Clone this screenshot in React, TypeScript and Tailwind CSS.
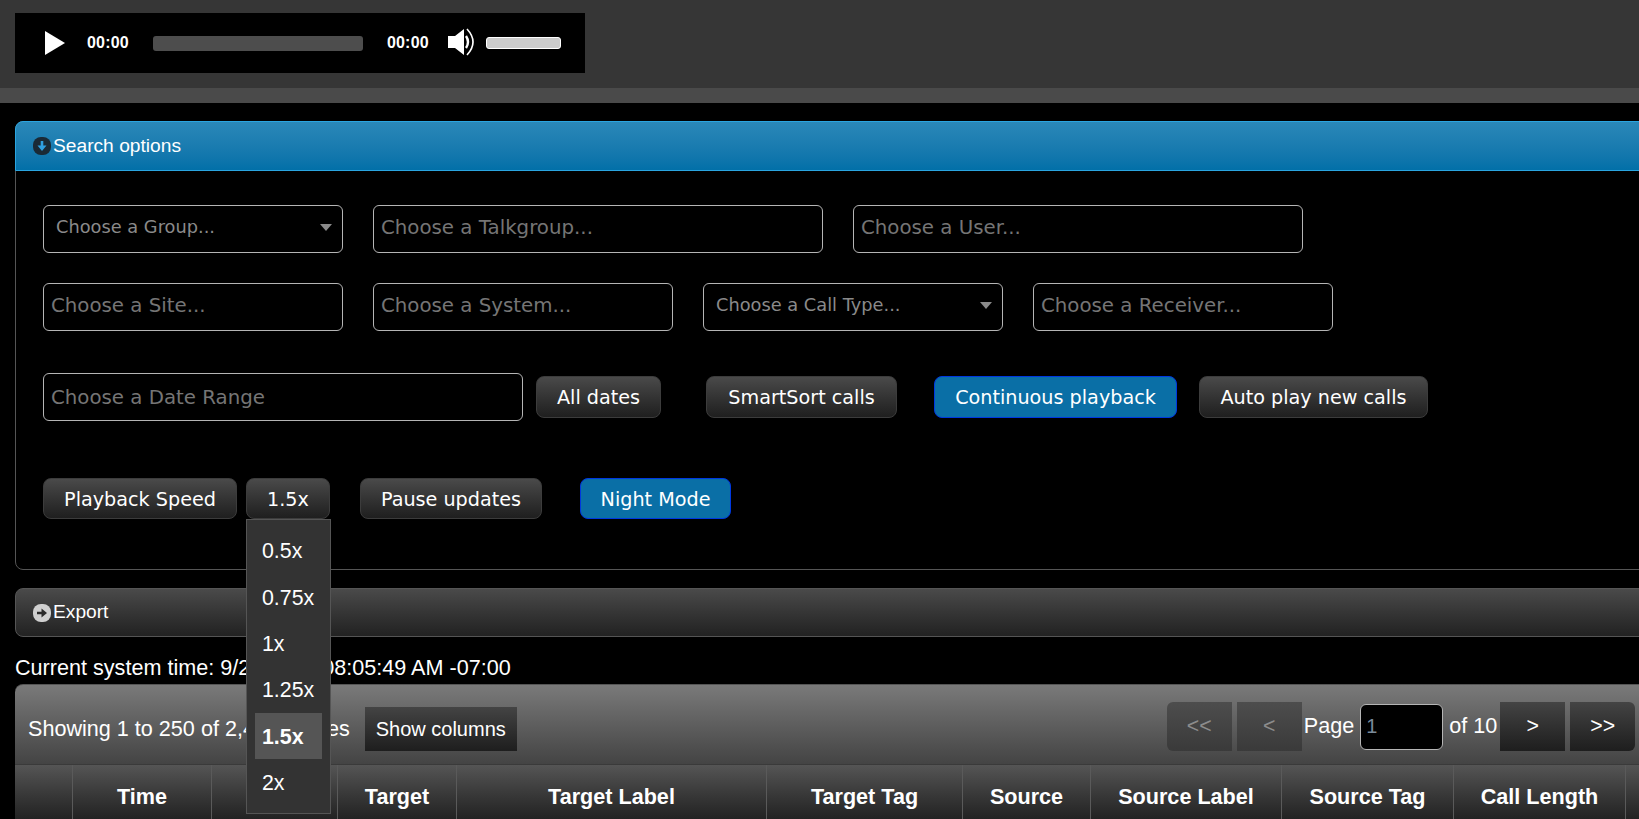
import React from 'react';

const inputClass =
  'h-12 rounded-md border border-[#b5b5b5] bg-black pl-[7px] pr-2 text-[19.8px] text-[#e6e6e6] placeholder:text-[#757575] outline-none [font-family:"DejaVu_Sans",sans-serif]';

const buttonBase =
  'rounded-lg border pt-[3px] text-[19.2px] text-white [font-family:"DejaVu_Sans",sans-serif] flex items-center justify-center';
const grayButton = `${buttonBase} border-[#3c3c3c] bg-linear-to-b from-[#4a4a4a] to-[#1f1f1f]`;
const blueButton = `${buttonBase} border-[#0038e0] bg-[#0a6fa6]`;

const speeds = ['0.5x', '0.75x', '1x', '1.25x', '1.5x', '2x'];

const columns = [
  { label: '', width: 'w-[58px]' },
  { label: 'Time', width: 'w-[139px]' },
  { label: '', width: 'w-[126px]' },
  { label: 'Target', width: 'w-[119px]' },
  { label: 'Target Label', width: 'w-[310px]' },
  { label: 'Target Tag', width: 'w-[196px]' },
  { label: 'Source', width: 'w-[128px]' },
  { label: 'Source Label', width: 'w-[191px]' },
  { label: 'Source Tag', width: 'w-[172px]' },
  { label: 'Call Length', width: 'w-[172px]' },
  { label: '', width: 'w-[100px]' },
];

const SelectBox: React.FC<{ label: string; className: string }> = ({ label, className }) => (
  <div className={`flex h-12 items-center justify-between rounded-md border border-[#b5b5b5] bg-black pl-3 pr-[10px] text-[17.8px] text-[#8a8a8a] [font-family:"DejaVu_Sans",sans-serif] ${className}`}>
    <span className="mb-1">{label}</span>
    <span className="mb-1 h-0 w-0 border-x-[6px] border-t-[7px] border-x-transparent border-t-[#8a8a8a]" />
  </div>
);

const CircleIcon: React.FC<{ bg: string; fg: string; dir: 'down' | 'right' }> = ({ bg, fg, dir }) => (
  <svg width="18" height="18" viewBox="0 0 18 18" className="shrink-0">
    <rect width="18" height="18" rx="8" fill={bg} />
    {dir === 'down' ? (
      <path d="M7.7 4h2.6v4.5h3.2L9 14 4.5 8.5h3.2Z" fill={fg} />
    ) : (
      <path d="M4 7.7h4.5V4.5L14 9l-5.5 4.5v-3.2H4Z" fill={fg} />
    )}
  </svg>
);

const PagerButton: React.FC<{ label: string; disabled?: boolean; className?: string }> = ({ label, disabled, className = '' }) => (
  <div
    className={`flex h-[49px] w-[65px] items-center justify-center text-[21.33px] ${
      disabled
        ? 'bg-linear-to-b from-[#4d4d4d] to-[#3a3a3a] text-[#8c8c8c]'
        : 'bg-linear-to-b from-[#444444] to-[#1e1e1e] text-white'
    } ${className}`}
  >
    {label}
  </div>
);

export default function App() {
  return (
    <div className='relative h-[819px] w-[1639px] overflow-hidden bg-black text-white [font-family:"Liberation_Sans",Arial,sans-serif]'>
      {/* audio player */}
      <div className="h-[88px] bg-[#363636] pl-[15px] pt-[13px]">
        <div className="flex h-[60px] w-[570px] items-center bg-black">
          <svg width="20" height="24" viewBox="0 0 20 24" className="ml-[30px] -mt-[1px]">
            <path d="M0 0 20 12 0 24Z" fill="#fff" />
          </svg>
          <span className="ml-[22px] text-[16px] font-bold tracking-[0.2px]">00:00</span>
          <div className="ml-[24px] h-[15px] w-[210px] rounded-[3px] bg-[#4d4d4d]" />
          <span className="ml-6 text-[16px] font-bold tracking-[0.2px]">00:00</span>
          <svg width="28" height="28" viewBox="0 0 28 28" className="ml-[18px] -mt-[3px]">
            <path d="M1 8h7l9-7v26l-9-7H1Z" fill="#fff" />
            <path d="M19 8q4 6 0 12" fill="none" stroke="#fff" strokeWidth="2.4" />
            <path d="M20 1q12 13 0 26" fill="none" stroke="#fff" strokeWidth="1.6" />
          </svg>
          <div className="ml-[11px] -mt-[1px] h-3 w-[75px] rounded-[3px] border border-white bg-[#cccccc]" />
        </div>
      </div>
      <div className="h-[15px] bg-[#4a4a4a]" />

      <div className="w-[1760px] pl-[15px] pt-[18px]">
        {/* search options */}
        <div className="h-[449px] rounded-lg border border-[#555555]">
          <div className="-m-px flex h-[50px] items-center rounded-t-lg border border-[#2aa5e0] bg-linear-to-b from-[#2a88b8] to-[#0270a8] pl-[17px] text-[19.2px]">
            <CircleIcon bg="#1a2a36" fg="#2f9fe0" dir="down" />
            <span className="ml-[2px] pt-px">Search options</span>
          </div>
          <div className="px-[27px] pt-[35px]">
            <div className="flex gap-[30px]">
              <SelectBox label="Choose a Group..." className="w-[300px]" />
              <input placeholder="Choose a Talkgroup..." className={`${inputClass} w-[450px] pb-1`} />
              <input placeholder="Choose a User..." className={`${inputClass} w-[450px] pb-1`} />
            </div>
            <div className="mt-[30px] flex gap-[30px]">
              <input placeholder="Choose a Site..." className={`${inputClass} w-[300px] pb-1`} />
              <input placeholder="Choose a System..." className={`${inputClass} w-[300px] pb-1`} />
              <SelectBox label="Choose a Call Type..." className="w-[300px]" />
              <input placeholder="Choose a Receiver..." className={`${inputClass} w-[300px] pb-1`} />
            </div>
            <div className="mt-[42px] flex items-center">
              <input placeholder="Choose a Date Range" className={`${inputClass} w-[480px]`} />
              <div className={`${grayButton} ml-[13px] h-[42px] w-[125px]`}>All dates</div>
              <div className={`${grayButton} ml-[45px] h-[42px] w-[191px]`}>SmartSort calls</div>
              <div className={`${blueButton} ml-[37px] h-[42px] w-[243px]`}>Continuous playback</div>
              <div className={`${grayButton} ml-[22px] h-[42px] w-[229px]`}>Auto play new calls</div>
            </div>
            <div className="mt-[57px] flex">
              <div className={`${grayButton} h-[41px] w-[194px]`}>Playback Speed</div>
              <div className={`${grayButton} ml-[9px] h-[41px] w-[84px]`}>1.5x</div>
              <div className={`${grayButton} ml-[30px] h-[41px] w-[182px]`}>Pause updates</div>
              <div className={`${blueButton} ml-[38px] h-[41px] w-[151px]`}>Night Mode</div>
            </div>
          </div>
        </div>

        {/* export */}
        <div className="mt-[18px] flex h-[49px] items-center rounded-lg border border-[#555555] bg-linear-to-b from-[#4a4a4a] to-[#222222] pl-[17px] text-[19.2px]">
          <CircleIcon bg="#d0d0d0" fg="#2a2a2a" dir="right" />
          <span className="ml-[2px]">Export</span>
        </div>

        <div className="mt-[16px] h-[30px] text-[21.6px] leading-[30px]">Current system time: 9/21/2023 08:05:49 AM -07:00</div>

        {/* call table */}
        <div className="mt-[1px] flex h-[80px] items-center rounded-t-lg border-t border-[#555555] bg-linear-to-b from-[#7a7a7a] to-[#444444] pl-[13px] pt-2">
          <span className="pt-[2px] text-[21.6px]">Showing 1 to 250 of 2,472 entries</span>
          <div className="ml-[15px] flex h-[44px] w-[152px] items-center justify-center bg-linear-to-b from-[#444444] to-[#1e1e1e] text-[20px]">Show columns</div>
          <div className="-mt-1 ml-[650px] flex items-center">
            <PagerButton label="<<" disabled className="rounded-l-md" />
            <PagerButton label="<" disabled className="ml-[5px]" />
            <span className="ml-[2px] text-[21.6px]">Page</span>
            <input defaultValue="1" className="ml-[6px] h-[46px] w-[83px] rounded-md border border-[#b5b5b5] bg-black px-[5px] text-[20px] text-[#7a8a9a] outline-none" />
            <span className="ml-[6px] text-[21.6px]">of 10</span>
            <PagerButton label=">" className="ml-[3px]" />
            <PagerButton label=">>" className="ml-[5px] rounded-r-md" />
          </div>
        </div>
        <div className="flex h-[60px] border-t border-[#3a3a3a] bg-linear-to-b from-[#555555] to-[#1e1e1e]">
          {columns.map((col, i) => (
            <div key={i} className={`flex items-center justify-center border-r border-[#5a5a5a] pt-[6px] text-[21.6px] font-bold ${col.width}`}>
              {col.label}
            </div>
          ))}
        </div>
      </div>

      {/* speed menu */}
      <div className="absolute left-[246px] top-[519px] w-[85px] border border-[#555555] bg-[#333333] px-2 pb-[8px] pt-[7px] text-[21.33px]">
        {speeds.map(s => (
          <div key={s} className={`flex h-[46.4px] items-center pl-[7px] pt-1 ${s === '1.5x' ? 'bg-[#555555] font-bold' : ''}`}>
            {s}
          </div>
        ))}
      </div>
    </div>
  );
}
